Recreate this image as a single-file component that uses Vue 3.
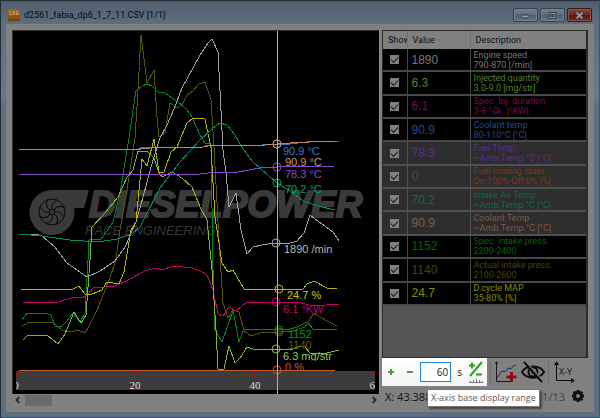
<script setup>
import { ref } from 'vue'

const range = ref('60')

const channels = ref([
  { value: '1890', name: 'Engine speed', info: '790-870 [/min]', color: '#777777', on: true },
  { value: '6.3', name: 'Injected quantity', info: '3.0-9.0 [mg/str]', color: '#568320', on: true },
  { value: '6.1', name: 'Spec. Inj. duration', info: '3-8 °Ck. [°KW]', color: '#850448', on: true },
  { value: '90.9', name: 'Coolant temp', info: '80-110°C [°C]', color: '#234b8a', on: true },
  { value: '78.3', name: 'Fuel Temp', info: '~Amb.Temp.°C [°C]', color: '#583080', on: true, dim: true },
  { value: '0', name: 'Fuel cooling state', info: 'On:100%-Off:0% [%]', color: '#7a381a', on: true, dim: true },
  { value: '70.2', name: 'Intake Air Temp', info: '~Amb.Temp.°C [°C]', color: '#08694e', on: true, dim: true },
  { value: '90.9', name: 'Coolant Temp', info: '~Amb.Temp.°C [°C]', color: '#7c5a44', on: true, dim: true },
  { value: '1152', name: 'Spec. intake press.', info: '2200-2400', color: '#006400', on: true },
  { value: '1140', name: 'Actual intake press.', info: '2100-2600', color: '#464600', on: true },
  { value: '24.7', name: 'D.cycle MAP', info: '35-80% [%]', color: '#8c8c00', on: true },
])

const traces = [
  { color: '#00862a', points: '22,320 27,313 45,313 51,315 55,326 62,326 67,321 73,313 80,322 85,313 88,260 89,240 101,239 107,231 113,222 120,193 129,138 133,110 136,91 142,86 147,84 152,86 158,92 165,93 172,98 182,105 187,110 192,117 200,135 205,143 211,144 213,270 215,330 222,342 233,311 239,342 244,329 290,329 297,327 307,322 313,329 337,329' },
  { color: '#565600', points: '22,326 30,322 52,322 62,330 70,332 78,330 85,333 88,328 97,310 108,283 116,260 120,230 127,190 135,138 138,90 141,35 147,83 154,70 157,117 159,137 165,133 170,103 177,108 182,105 187,95 193,91 199,84 205,82 211,100 214,147 219,240 223,303 228,318 233,310 239,312 244,331 251,336 260,333 277,332 293,331 305,327 314,313 325,320 337,326' },
  { color: '#a0a0a0', points: '19,234 35,234 42,236 55,247 67,263 77,270 87,277 100,271 115,261 125,247 136,222 143,197 153,160 160,138 167,125 174,109 182,88 200,55 208,43 212,39 218,52 223,150 226,173 229,207 236,193 241,230 247,254 253,247 262,245 275,243 287,244 297,241 304,233 310,215 322,224 333,232 339,241' },
  { color: '#c0006a', points: '23,302 59,302 64,300 75,297 82,298 88,294 93,288 115,286 128,280 145,271 155,268 162,270 173,266 192,268 200,271 207,275 213,290 218,314 223,316 229,307 236,311 247,302 275,302 297,302 313,306 339,304' },
  { color: '#80b434', points: '23,340 28,335 47,335 58,344 65,334 74,312 81,323 86,315 90,260 92,227 105,213 118,197 127,177 133,170 138,151 148,152 154,158 159,173 162,177 172,172 182,178 192,187 200,207 207,220 212,270 216,330 218,369 224,369 229,346 235,363 240,358 247,347 253,349 293,349 300,346 305,347 310,353 327,353 339,350' },
  { color: '#b4b400', points: '21,289 73,289 79,286 85,294 92,294 102,290 107,282 119,284 124,272 126,260 131,230 136,222 142,159 147,166 154,139 159,173 164,172 171,152 177,147 187,123 193,118 205,119 211,148 215,217 222,263 228,272 233,270 244,289 303,289 307,284 314,281 327,288 337,289' },
  { color: '#009068', points: '19,234 42,236 70,240 98,242 117,239 132,234 140,227 160,188 180,162 200,140 213,128 220,123 227,125 235,135 243,149 253,162 277,183 290,191 303,201 318,206 335,210' },
  { color: '#8848c4', points: '19,174 200,174 217,172 238,172 260,168 277,167 335,166' },
  { color: '#3a6cc0', points: '138,149 143,147 150,147 203,147 208,145 262,145 266,144 290,144 306,142 310,141 339,141' },
  { color: '#be8c64', points: '19,149 141,149 150,148 204,147 213,145 265,145 277,144 290,143 309,142 335,141' },
  { color: '#c05a20', points: '19,370 335,370' },
]

const readings = [
  { text: '90.9 °C', x: 283, y: 155, color: '#3f73cc' },
  { text: '90.9 °C', x: 285, y: 166, color: '#cc9668' },
  { text: '78.3 °C', x: 285, y: 178, color: '#8a4ac8' },
  { text: '70.2 °C', x: 285, y: 193, color: '#00a078' },
  { text: '1890 /min', x: 284, y: 253, color: '#b8b8b8' },
  { text: '24.7 %', x: 287, y: 299, color: '#c8c800' },
  { text: '6.1 °KW', x: 283, y: 313, color: '#c4006c' },
  { text: '1152', x: 288, y: 338, color: '#009c10' },
  { text: '1140', x: 288, y: 349, color: '#5c5c00' },
  { text: '6.3 mg/str', x: 283, y: 360, color: '#90cc48' },
  { text: '0 %', x: 285, y: 371, color: '#c85828' },
]

const markers = [
  { x: 277, y: 144, color: '#5c80c0' },
  { x: 277, y: 144, color: '#c89468' },
  { x: 277, y: 167, color: '#8848c4' },
  { x: 277, y: 183, color: '#009870' },
  { x: 276, y: 243, color: '#a8a8a8' },
  { x: 279, y: 289, color: '#b8b800' },
  { x: 276, y: 302, color: '#c0006a' },
  { x: 279, y: 330, color: '#008c20' },
  { x: 279, y: 332, color: '#565600' },
  { x: 276, y: 349, color: '#88b83c' },
  { x: 277, y: 370, color: '#c05a20' },
]

const ticks = [
  { x: 16, label: '0' },
  { x: 135, label: '20' },
  { x: 255, label: '40' },
  { x: 375, label: '60' },
]

const blades = [0, 45, 90, 135, 180, 225, 270, 315]
const teeth = [0, 45, 90, 135]
</script>

<template>
  <div class="window">
    <header class="titlebar">
      <svg class="app-icon" viewBox="0 0 12 12" aria-hidden="true">
        <defs>
          <linearGradient id="appFill" x1="0" y1="0" x2="0" y2="1">
            <stop offset="0" stop-color="#a8660c" />
            <stop offset="0.55" stop-color="#98520c" />
            <stop offset="1" stop-color="#6a4410" />
          </linearGradient>
        </defs>
        <rect width="12" height="12" rx="1" fill="url(#appFill)" />
        <path d="M2 2v4h2M5 2.500h1.500v3h-1.500zM10.500 2.500h-2v3h2v-1.500" fill="none" stroke="#b8a080" />
        <path d="M2 9l2-1 2 1.500 2-1.500 2 1" fill="none" stroke="#6c7820" />
      </svg>
      <h1>d2561_fabia_dp6_1_7_11.CSV [1/1]</h1>
      <button class="win" aria-label="Minimize">
        <svg viewBox="0 0 24 13"><rect x="8" y="6" width="8" height="3" rx="1" fill="#999" stroke="#343c46" /></svg>
      </button>
      <button class="win" aria-label="Maximize">
        <svg viewBox="0 0 24 13"><rect x="8.500" y="3.500" width="7" height="6" fill="#999" stroke="#343c46" /><rect x="10.500" y="5.500" width="3" height="2" fill="#566678" stroke="#343c46" /></svg>
      </button>
      <button class="win close" aria-label="Close">
        <svg viewBox="0 0 24 13"><path d="M9 3.500l6 6M15 3.500l-6 6" stroke="#443038" stroke-width="4" /><path d="M9 3.500l6 6M15 3.500l-6 6" stroke="#a09898" stroke-width="2" /></svg>
      </button>
    </header>

    <main class="client">
      <section class="plot">
        <svg class="chart" viewBox="12 30 368 364" role="img" aria-label="Log chart">
          <defs>
            <clipPath id="plotArea"><rect x="16" y="30" width="359" height="361" /></clipPath>
            <clipPath id="labelArea"><rect x="280" y="30" width="95" height="331" /></clipPath>
          </defs>
          <rect x="12" y="30" width="368" height="364" fill="#000" />

          <g class="watermark">
            <path d="M52 190H89L84 208H74A22.500 22.500 0 1 1 52 190Z" fill="#3a3a3a" />
            <circle cx="52" cy="212" r="13" fill="#3a3a3a" stroke="#0a0a0a" />
            <path
              v-for="a in blades"
              :key="a"
              d="M52 209C51 205 53 201 58 200.500"
              :transform="`rotate(${a} 52 212)`"
              fill="none"
              stroke="#080808"
            />
            <circle cx="52" cy="212" r="2.500" fill="#3a3a3a" stroke="#080808" />
            <text class="brand" x="89" y="217">DIESELPOWER</text>
            <text class="tagline" x="85" y="235">RACE ENGINEERING</text>
          </g>

          <rect x="16" y="371" width="359" height="19" fill="#3c3c3c" />
          <g clip-path="url(#plotArea)">
            <g v-for="t in ticks" :key="t.label">
              <rect :x="t.x - 1" y="371" width="2" height="5" fill="#c80000" />
              <text class="tick" :x="t.x" y="389">{{ t.label }}</text>
            </g>
          </g>

          <polyline v-for="t in traces" :key="t.color" class="trace" :points="t.points" :stroke="t.color" />
          <circle v-for="(m, i) in markers" :key="i" :cx="m.x" :cy="m.y" r="4" fill="none" :stroke="m.color" />
          <g>
            <template v-for="(r, i) in readings" :key="i">
              <text v-if="i < 10" class="reading" clip-path="url(#labelArea)" :x="r.x" :y="r.y" :fill="r.color">{{ r.text }}</text>
              <text v-else class="reading" clip-path="url(#plotArea)" :x="r.x" :y="r.y" :fill="r.color">{{ r.text }}</text>
            </template>
          </g>
          <rect x="277" y="30" width="1" height="364" fill="#c8bc28" />
          <path d="M12.500 394V30.500H379.500" fill="none" stroke="#303030" />
          <path d="M379.500 30V394" stroke="#8c8c8c" />
        </svg>
        <div class="scroll">
          <button class="arrow" aria-label="Scroll left"><svg viewBox="0 0 6 8"><path d="M4.500 1L1.500 4l3 3" /></svg></button>
          <span class="thumb"></span>
          <button class="arrow end" aria-label="Scroll right"><svg viewBox="0 0 6 8"><path d="M1.500 1l3 3-3 3" /></svg></button>
        </div>
      </section>

      <section class="side">
        <div class="grid">
          <table>
            <thead>
              <tr><th class="c-show">Show</th><th class="c-value">Value</th><th class="c-desc">Description</th></tr>
            </thead>
            <tbody>
              <tr v-for="(c, i) in channels" :key="i" :class="{ dim: c.dim }" :style="{ color: c.color }">
                <td class="check"><input v-model="c.on" type="checkbox" :aria-label="c.name" /></td>
                <td class="value">{{ c.value }}</td>
                <td class="desc">{{ c.name }}<br />{{ c.info }}</td>
              </tr>
            </tbody>
          </table>
        </div>

        <div class="toolbar">
          <div class="spot">
            <button aria-label="Increase range"><svg class="sign" viewBox="0 0 8 8"><path d="M1 4h6M4 1v6" /></svg></button>
            <button aria-label="Decrease range"><svg class="sign" viewBox="0 0 8 8"><path d="M1 4h6" /></svg></button>
            <input id="range" v-model="range" type="text" />
            <label for="range">s</label>
            <button aria-label="Axis steps">
              <svg class="steps" viewBox="0 0 16 23">
                <path d="M14 1L2 15M1 4.500h6M4 1.500v6M8 13.500h6" fill="none" stroke="#28a018" stroke-width="2" />
                <path d="M1 21.500h14M2.500 21v-1M5.500 21v-2M8.500 21v-3M11.500 21v-2M14 21v-1" fill="none" stroke="#777" />
              </svg>
            </button>
            <div class="tip" role="tooltip">X-axis base display range</div>
          </div>
          <span class="rule"></span>
          <button aria-label="Add chart">
            <svg class="icon" viewBox="0 0 24 24">
              <path d="M2.500 2v19.500H16" fill="none" stroke="#181818" />
              <path d="M1 4l1.500-3L4 4z" fill="#181818" />
              <path d="M3 18l4-6 2-1 2 1 3-4 3 1 2-3 3-1" fill="none" stroke="#242480" />
              <path d="M17.500 12v10M12.500 17h10" stroke="#8c0c14" stroke-width="3" />
            </svg>
          </button>
          <button aria-label="Hide channels">
            <svg class="icon" viewBox="0 0 24 24" fill="none" stroke="#0c0c0c">
              <path d="M1 12C5 4.500 19 4.500 23 12C19 19.500 5 19.500 1 12Z" stroke-width="2" />
              <circle cx="12" cy="12" r="4.500" stroke-width="2" />
              <circle cx="12" cy="12" r="1.500" fill="#0c0c0c" />
              <path d="M4 2L22 22" stroke="#808080" stroke-width="3" />
              <path d="M3 2L21 22" stroke-width="2" />
            </svg>
          </button>
          <span class="rule"></span>
          <button aria-label="X-Y chart">
            <svg class="icon" viewBox="0 0 24 24">
              <path d="M4.500 3v17.500H21" fill="none" stroke="#0c0c0c" />
              <path d="M2 5l2.500-4L7 5zM19 18l4 2.500-4 2.500z" fill="#0c0c0c" />
              <text class="xy" x="7" y="15">X-Y</text>
            </svg>
          </button>
        </div>

        <footer class="status">
          <span>X: 43.388</span>
          <span class="count">11/13</span>
          <button aria-label="Settings">
            <svg class="gear" viewBox="0 0 14 14">
              <path v-for="a in teeth" :key="a" d="M7 1V13" :transform="`rotate(${a} 7 7)`" stroke="#101010" stroke-width="3" />
              <circle cx="7" cy="7" r="3.500" fill="none" stroke="#101010" stroke-width="3" />
              <circle cx="7" cy="7" r="2" fill="#808080" />
            </svg>
          </button>
        </footer>
      </section>
    </main>
  </div>
</template>

<style>
body {
  background: #5e6e7e;
}
</style>

<style scoped>
* {
  box-sizing: border-box;
}
.window {
  min-height: 100vh;
  display: flex;
  flex-direction: column;
  padding: 0 5px 5px;
  font-family: "Open Sans", "Noto Sans", sans-serif;
  border: 1px solid #242c34;
  border-right-color: #28606c;
  border-bottom-color: #20606c;
  background: linear-gradient(#505e6c, #5e6e80 24px, #667890 92px, #5e6e7e 110px);
}
button {
  display: flex;
  align-items: center;
  justify-content: center;
  padding: 0;
  border: 0;
  background: none;
}
.titlebar {
  height: 23px;
  display: flex;
  align-items: center;
  gap: 2px;
  padding: 5px 2px 0;
}
.app-icon {
  width: 12px;
  height: 12px;
}
h1 {
  flex: 1;
  margin: 0 0 0 2px;
  font: 9px Roboto, "Open Sans", sans-serif;
  color: #08080c;
}
.win {
  width: 25px;
  height: 14px;
  border: 1px solid #36424e;
  border-radius: 2px;
  background: linear-gradient(#74828f, #5e6d7c 45%, #4e5e6e 50%, #647484);
  box-shadow: inset 0 0 0 1px #748290;
}
.win svg {
  width: 23px;
  height: 13px;
}
.win.close {
  border-color: #381818;
  background: linear-gradient(#7c4a44, #702c24 45%, #601408 50%, #702c1c);
  box-shadow: inset 0 0 0 1px #845850;
}
.client {
  flex: 1;
  display: grid;
  grid-template-columns: 1fr 206px;
  align-items: start;
  gap: 2px;
  padding: 6px;
  background: #808080;
}
.chart {
  display: block;
  width: 100%;
}
.trace {
  fill: none;
  stroke-width: 1;
  shape-rendering: crispEdges;
}
.brand {
  font: italic 700 37px "Liberation Sans", sans-serif;
  fill: #3a3a3a;
  stroke: #3a3a3a;
  stroke-width: 2;
}
.tagline {
  font: italic 13px "Liberation Sans", sans-serif;
  fill: #363636;
}
.tick {
  font: 11px "Liberation Serif", serif;
  text-anchor: middle;
  fill: #ddd;
}
.reading {
  font: 11px "Liberation Sans", sans-serif;
}
.scroll {
  display: flex;
  align-items: center;
  height: 12px;
  padding: 0 3px;
}
.arrow svg {
  width: 6px;
  height: 8px;
  fill: none;
  stroke: #303030;
  stroke-width: 2;
}
.thumb {
  width: 27px;
  height: 11px;
  margin-left: 4px;
  background: #6a6a6a;
}
.end {
  margin-left: auto;
}
.side {
  display: flex;
  flex-direction: column;
}
.grid {
  height: 328px;
  border: 1px solid #2c2c2c;
  border-right-width: 2px;
  background: #555;
}
table {
  width: 100%;
  height: 275px;
  table-layout: fixed;
  border-collapse: collapse;
}
th {
  height: 18px;
  padding: 0 5px;
  background: #808080;
  border-right: 1px solid #707070;
  font: 9px Roboto, "Liberation Sans", sans-serif;
  text-align: left;
  color: #101010;
  overflow: hidden;
}
.c-show {
  width: 24px;
}
.c-value {
  width: 63px;
}
.c-desc {
  border-right: 0;
}
td {
  padding: 0;
  background: #000;
  border-bottom: 2px solid #484848;
  border-right: 1px solid #484848;
}
td:last-child {
  border-right: 0;
}
.dim td {
  background: #2d2d2d;
  border-color: #505050;
}
.check input {
  appearance: none;
  display: block;
  width: 9px;
  height: 9px;
  margin: 0 auto;
  background: #808080;
}
.check input:checked::after {
  content: "";
  display: block;
  width: 6px;
  height: 3px;
  margin: 2px 0 0 1px;
  border: solid #181818;
  border-width: 0 0 1px 1px;
  transform: rotate(-45deg);
}
.value {
  padding-left: 4px;
  font: 12px "Liberation Sans", sans-serif;
}
.desc {
  padding-left: 3px;
  font: 9px/10px Roboto, "Liberation Sans", sans-serif;
  white-space: nowrap;
}
.toolbar {
  display: flex;
  align-items: center;
  gap: 3px;
  height: 28px;
}
.spot {
  position: relative;
  display: flex;
  align-items: center;
  align-self: stretch;
  gap: 6px;
  width: 105px;
  padding: 0 3px 0 5px;
  background: linear-gradient(#fff, #f4f4f4);
  font-size: 10px;
}
.sign {
  width: 8px;
  height: 8px;
  stroke: #4c9c3c;
  stroke-width: 2;
}
.spot button + button {
  margin-left: 5px;
}
.spot input {
  flex: 1;
  min-width: 0;
  height: 20px;
  padding: 0 2px;
  border: 1px solid #2088dc;
  background: #fff;
  font: 10px "Open Sans", "Noto Sans", sans-serif;
  text-align: right;
  color: #222;
}
.spot label {
  color: #222;
}
.steps {
  width: 16px;
  height: 23px;
}
.tip {
  position: absolute;
  z-index: 1;
  top: 31px;
  left: 45px;
  height: 18px;
  padding: 0 3px;
  border: 1px solid #777;
  background: #fff;
  box-shadow: 2px 2px 2px #444;
  font-size: 9px;
  line-height: 16px;
  white-space: nowrap;
  color: #575757;
}
.rule {
  width: 1px;
  height: 23px;
  background: #6c6c6c;
}
.icon {
  width: 24px;
  height: 24px;
}
.xy {
  font: 9px "Open Sans", "Noto Sans", sans-serif;
  fill: #0c0c0c;
}
.status {
  display: flex;
  align-items: center;
  gap: 6px;
  height: 20px;
  padding: 0 3px;
  font-size: 11px;
  color: #101010;
}
.count {
  margin-left: auto;
  color: #444;
}
.gear {
  width: 14px;
  height: 14px;
}
</style>
